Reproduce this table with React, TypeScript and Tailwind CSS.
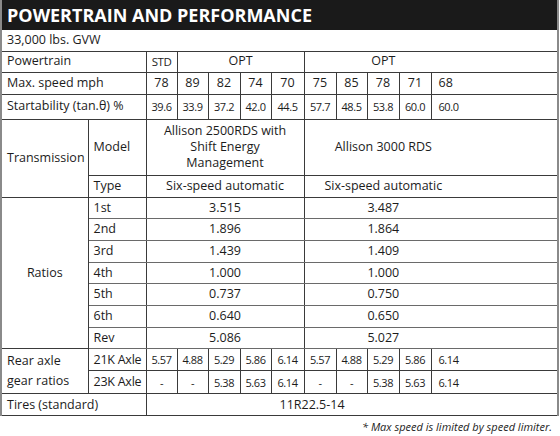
const cellB = 'border border-[#3a3a3a]';
const small = 'border border-[#3a3a3a] text-center text-[11px] tracking-[-0.04em]';

const speeds = ['89', '82', '74', '70', '75', '85', '78', '71'];
const starts = ['33.9', '37.2', '42.0', '44.5', '57.7', '48.5', '53.8', '60.0'];

const ratios: [string, string, string][] = [
  ['1st', '3.515', '3.487'],
  ['2nd', '1.896', '1.864'],
  ['3rd', '1.439', '1.409'],
  ['4th', '1.000', '1.000'],
  ['5th', '0.737', '0.750'],
  ['6th', '0.640', '0.650'],
  ['Rev', '5.086', '5.027'],
];

const axle21 = ['5.57', '4.88', '5.29', '5.86', '6.14'];
const axle23 = ['-', '-', '5.38', '5.63', '6.14'];

function AxleCells({ vals }: { vals: string[] }) {
  return (
    <>
      {vals.map((v, i) => (
        <td key={'a' + i} className={small}>{v}</td>
      ))}
      {vals.slice(0, 4).map((v, i) => (
        <td key={'b' + i} className={small}>{v}</td>
      ))}
      <td className={`${small} border-r-0 text-left pl-[7px]`}>{vals[4]}</td>
    </>
  );
}

export default function App() {
  return (
    <div className="w-[560px] h-[436px] bg-white text-[#1c1c1c] font-['Open_Sans',sans-serif] text-[12.5px] leading-none">
      <div className="w-[559px] border-x-2 border-[#8a8a8a]">
        <div className="h-[30px] bg-[#1a1a1a] flex items-center pl-[5px]">
          <h1 className="text-white font-bold text-[18px] tracking-[0em]">POWERTRAIN AND PERFORMANCE</h1>
        </div>
        <table className="w-[555px] table-fixed border-collapse">
          <colgroup>
            <col className="w-[86px]" />
            <col className="w-[58px]" />
            <col className="w-[31px]" />
            <col className="w-[31px]" />
            <col className="w-[32px]" />
            <col className="w-[31px]" />
            <col className="w-[33px]" />
            <col className="w-[32px]" />
            <col className="w-[31px]" />
            <col className="w-[32px]" />
            <col className="w-[32px]" />
            <col className="w-[126px]" />
          </colgroup>
          <tbody>
            <tr className="h-[21px]">
              <td colSpan={12} className={`${cellB} border-t-0 border-l-0 border-r-0 pl-[5px]`}>33,000 lbs. GVW</td>
            </tr>
            <tr className="h-[21px]">
              <td colSpan={2} className={`${cellB} border-l-0 pl-[5px]`}>Powertrain</td>
              <td className={`${cellB} text-center text-[11.5px] tracking-[-0.04em]`}>STD</td>
              <td colSpan={4} className={`${cellB} text-center`}>OPT</td>
              <td colSpan={5} className={`${cellB} border-r-0 text-center pr-[95px]`}>OPT</td>
            </tr>
            <tr className="h-[22px]">
              <td colSpan={2} className={`${cellB} border-l-0 pl-[5px]`}>Max. speed mph</td>
              <td className={`${cellB} text-center`}>78</td>
              {speeds.map((s, i) => (
                <td key={i} className={`${cellB} text-center`}>{s}</td>
              ))}
              <td className={`${cellB} border-r-0 pl-[7px]`}>68</td>
            </tr>
            <tr className="h-[25px]">
              <td colSpan={2} className={`${cellB} border-l-0 pl-[5px]`}>Startability (tan.θ) %</td>
              <td className={small}>39.6</td>
              {starts.map((s, i) => (
                <td key={i} className={small}>{s}</td>
              ))}
              <td className={`${small} border-r-0 text-left pl-[7px]`}>60.0</td>
            </tr>
            <tr className="h-[56px]">
              <td rowSpan={2} className={`${cellB} border-l-0 pl-[5px]`}>Transmission</td>
              <td className={`${cellB} pl-[5px]`}>Model</td>
              <td colSpan={5} className={`${cellB} text-center leading-[16px]`}>
                Allison 2500RDS with
                <br />
                Shift Energy
                <br />
                Management
              </td>
              <td colSpan={5} className={`${cellB} border-r-0 text-center pr-[95px]`}>Allison 3000 RDS</td>
            </tr>
            <tr className="h-[22px]">
              <td className={`${cellB} pl-[5px]`}>Type</td>
              <td colSpan={5} className={`${cellB} text-center`}>Six-speed automatic</td>
              <td colSpan={5} className={`${cellB} border-r-0 text-center pr-[95px]`}>Six-speed automatic</td>
            </tr>
            {ratios.map(([g, a, b], i) => (
              <tr key={g} className="h-[21.7px]">
                {i === 0 && (
                  <td rowSpan={7} className={`${cellB} border-l-0 text-center`}>Ratios</td>
                )}
                <td className={`${cellB} border-y-[#6a6a6a] pl-[5px]`}>{g}</td>
                <td colSpan={5} className={`${cellB} border-y-[#6a6a6a] text-center`}>{a}</td>
                <td colSpan={5} className={`${cellB} border-y-[#6a6a6a] border-r-0 text-center pr-[95px]`}>{b}</td>
              </tr>
            ))}
            <tr className="h-[22px]">
              <td rowSpan={2} className={`${cellB} border-l-0 pl-[5px] leading-[20px]`}>
                Rear axle
                <br />
                gear ratios
              </td>
              <td className={`${cellB} pl-[5px] tracking-[-0.02em]`}>21K Axle</td>
              <AxleCells vals={axle21} />
            </tr>
            <tr className="h-[23px]">
              <td className={`${cellB} pl-[5px] tracking-[-0.02em]`}>23K Axle</td>
              <AxleCells vals={axle23} />
            </tr>
            <tr className="h-[22px]">
              <td colSpan={2} className={`${cellB} border-l-0 pl-[5px]`}>Tires (standard)</td>
              <td colSpan={10} className={`${cellB} border-r-0 pl-[133px]`}>11R22.5-14</td>
            </tr>
          </tbody>
        </table>
      </div>
      <p className="mt-[5px] pr-[8px] text-right italic text-[11px]">* Max speed is limited by speed limiter.</p>
    </div>
  );
}
